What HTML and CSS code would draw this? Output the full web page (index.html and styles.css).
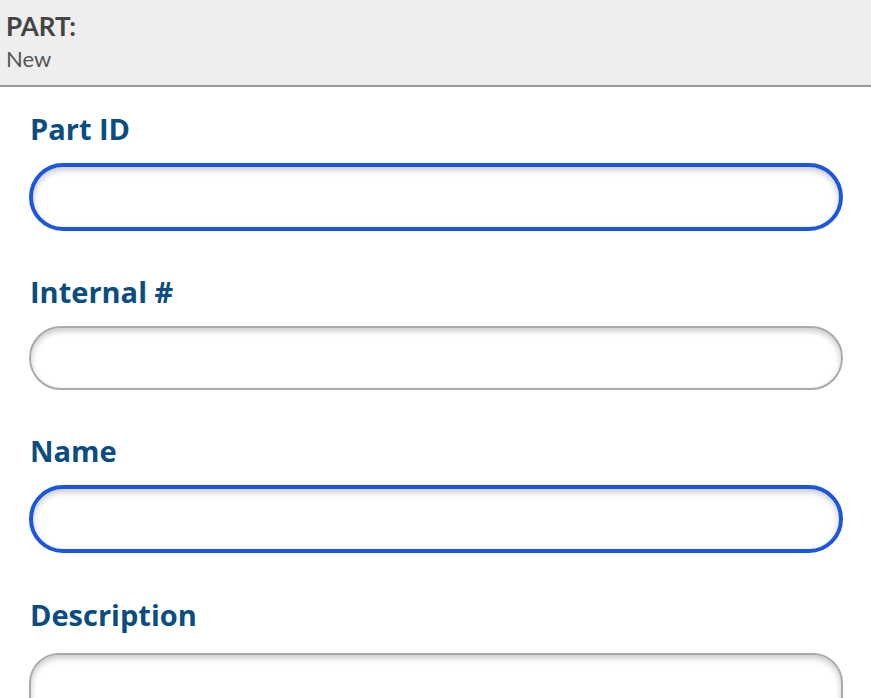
FILE: index.html
```html
<!DOCTYPE html>
<html>
<head>
<meta charset="utf-8">
<link rel="stylesheet" href="styles.css">
</head>
<body>
<header class="page-header">
  <div class="page-title">PART:</div>
  <div class="page-sub">New</div>
</header>
<form class="form">
  <div class="field field-first">
    <label class="field-label" for="partid">Part ID</label>
    <input class="field-input is-active" id="partid" type="text">
  </div>
  <div class="field">
    <label class="field-label" for="internal">Internal #</label>
    <input class="field-input" id="internal" type="text">
  </div>
  <div class="field">
    <label class="field-label" for="name">Name</label>
    <input class="field-input is-active" id="name" type="text">
  </div>
  <div class="field field-desc">
    <label class="field-label" for="desc">Description</label>
    <textarea class="field-input field-area" id="desc"></textarea>
  </div>
</form>
</body>
</html>
```

FILE: styles.css
```css
html, body {
  margin: 0;
  padding: 0;
  background: #fff;
  overflow: hidden;
  font-family: "Lato", "DejaVu Sans", sans-serif;
}
.page-header {
  background: #eeeeee;
  border-bottom: 2px solid #999999;
  box-sizing: border-box;
  padding: 11px 6px 0;
  height: 87px;
}
.page-title {
  font-weight: 700;
  font-size: 26px;
  line-height: 30px;
  color: #444444;
}
.page-sub {
  font-size: 22px;
  line-height: 35px;
  color: #555555;
}
.form {
  padding: 0 28px 0 29px;
  display: flex;
  flex-direction: column;
}
.field {
  display: flex;
  flex-direction: column;
}
.field-label {
  font-family: "Open Sans", "DejaVu Sans", sans-serif;
  font-weight: 700;
  font-size: 29px;
  line-height: 36px;
  color: #0a4d80;
  padding-left: 1px;
  margin-top: 43px;
  margin-bottom: 16px;
}
.field-first .field-label {
  margin-top: 24px;
}
.field-desc .field-label {
  margin-top: 44px;
  margin-bottom: 20px;
}
.field-input {
  display: block;
  box-sizing: border-box;
  width: 100%;
  height: 64px;
  margin: 0;
  border: 2px solid #aaaaaa;
  border-radius: 32px;
  background: #fff;
  box-shadow: inset 0 3px 6px rgba(0, 0, 0, 0.22);
  outline: none;
  font: inherit;
  padding: 0 24px;
}
.field-input.is-active {
  height: 68px;
  border: 4px solid #1b56df;
  border-radius: 34px;
}
.field-area {
  resize: none;
  height: 120px;
  border-radius: 30px;
}
```
